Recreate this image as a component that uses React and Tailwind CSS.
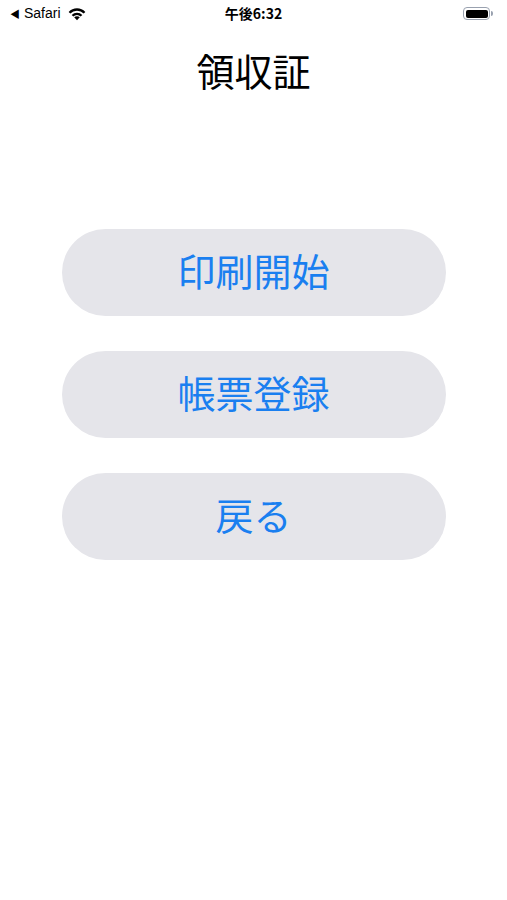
export default function App() {
  const font = { fontFamily: '"Noto Sans CJK JP", "Liberation Sans", sans-serif' };
  return (
    <div className="w-[507px] h-[900px] bg-white" style={font}>
      <div className="flex items-center justify-between h-[27px] px-[10px] text-[13px] text-black">
        <div className="flex items-center gap-[4px] w-[120px]">
          <span className="text-[10px]">◀</span>
          <span className="font-['Liberation_Sans'] text-[14px]">Safari</span>
          <svg width="20" height="15" viewBox="0 0 18 14" className="ml-[2px]">
            <path d="M9 13.4 L6.4 10.6 A3.6 3.6 0 0 1 11.6 10.6 Z" fill="black" />
            <path d="M4 8.3 A7 7 0 0 1 14 8.3 L12.4 9.9 A4.7 4.7 0 0 0 5.6 9.9 Z" fill="black" />
            <path d="M1.2 5.5 A10.8 10.8 0 0 1 16.8 5.5 L15.2 7.1 A8.5 8.5 0 0 0 2.8 7.1 Z" fill="black" />
          </svg>
        </div>
        <div className="font-bold text-[14px]">午後6:32</div>
        <div className="flex items-center justify-end w-[120px] pr-[4px]">
          <div className="w-[27px] h-[13px] rounded-[4px] border border-gray-400 p-[1.5px]">
            <div className="w-full h-full rounded-[2px] bg-black" />
          </div>
          <div className="w-[2px] h-[5px] rounded-r bg-gray-400 ml-[1px]" />
        </div>
      </div>
      <h1 className="text-center text-[38px] leading-none mt-[24px] text-black">領収証</h1>
      <div className="flex flex-col items-center gap-[35px] mt-[140px]">
        {["印刷開始", "帳票登録", "戻る"].map((t) => (
          <button
            key={t}
            className="w-[384px] h-[87px] rounded-full bg-[#e5e5ea] text-[#1a7ff0] text-[38px] leading-none pb-[5px]"
          >
            {t}
          </button>
        ))}
      </div>
    </div>
  );
}
